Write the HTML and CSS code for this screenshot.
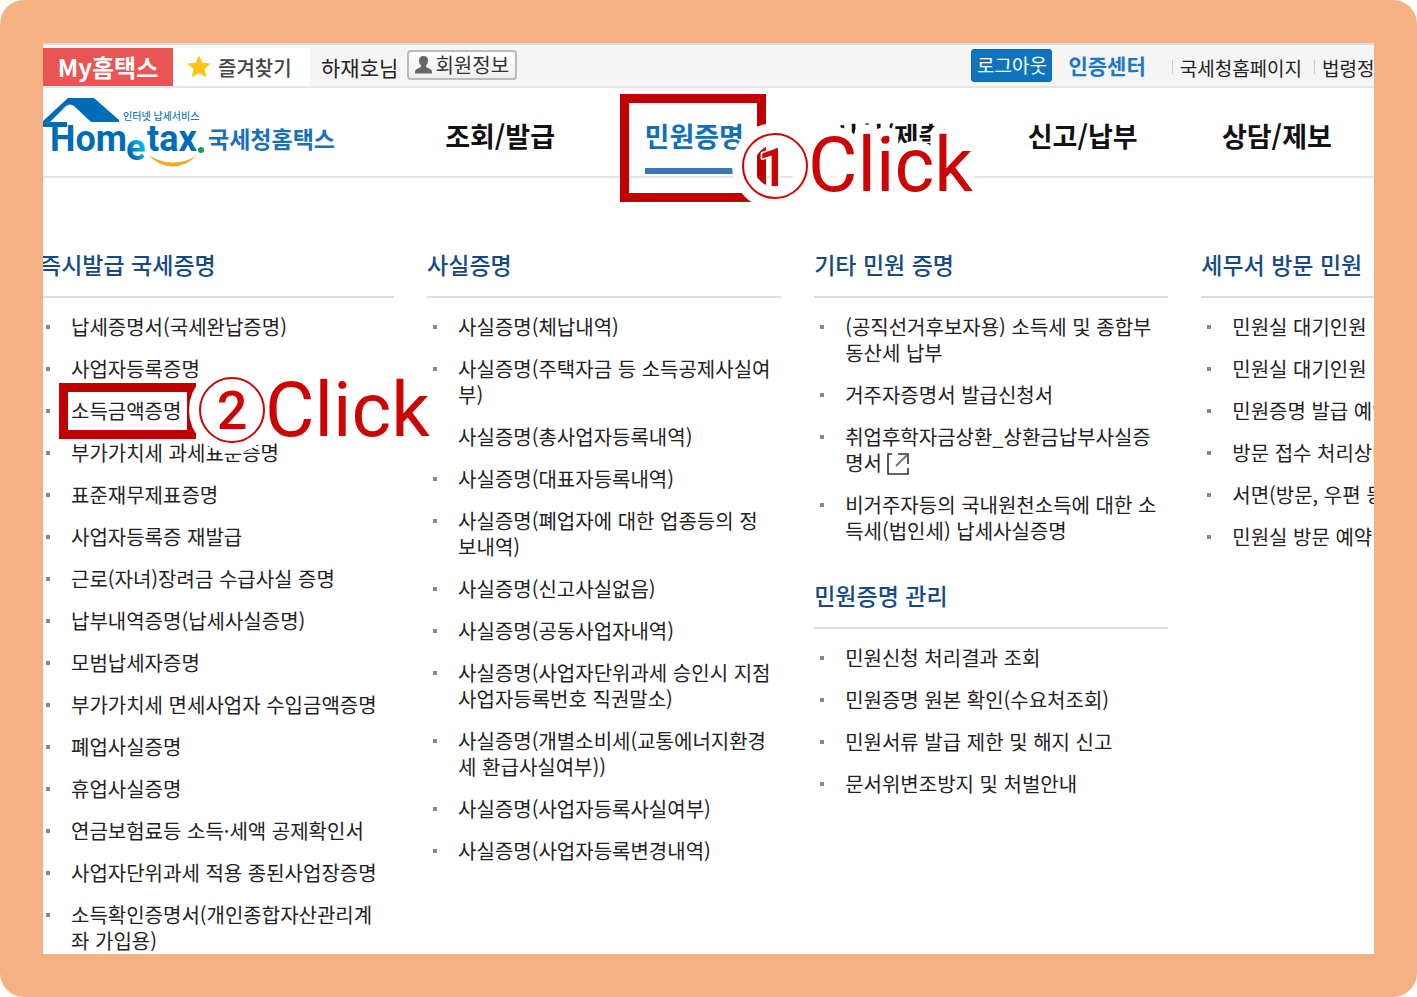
FILE: index.html
```html
<!DOCTYPE html>
<html lang="ko">
<head>
<meta charset="utf-8">
<title>국세청홈택스</title>
<link rel="stylesheet" href="styles.css">
</head>
<body>
<div class="frame">
<div class="screen">
  <header class="topbar">
    <a class="my" href="#">My홈택스</a>
    <a class="fav" href="#"><svg width="24" height="24" viewBox="0 0 24 24"><path d="M12 1.500l3 6.800 7.500.7-5.600 5 1.700 7.400L12 17.500l-6.600 3.900 1.700-7.400-5.600-5L9 8.300z" fill="#ffc20e" stroke="#ffc20e" stroke-width="1" stroke-linejoin="round"/></svg>즐겨찾기</a>
    <span class="user">하재호님</span>
    <button class="info" type="button"><svg width="17" height="18" viewBox="0 0 17 18"><path d="M8.500 0c3 0 4.500 2 4.500 4.800 0 2-.8 3.700-2 4.700v1.500l4.500 2.200c1 .6 1.500 1.500 1.500 2.800v1.500H0V16c0-1.300.5-2.200 1.500-2.800L6 11V9.500c-1.200-1-2-2.700-2-4.700C4 2 5.500 0 8.500 0z" fill="#666"/></svg>회원정보</button>
    <div class="util">
      <button class="logout" type="button">로그아웃</button>
      <a class="cert" href="#">인증센터</a>
      <a class="link" href="#">국세청홈페이지</a>
      <a class="link" href="#">법령정보</a>
    </div>
  </header>
  <div class="mainbar">
    <a class="logo" href="#" aria-label="국세청홈택스">
      <svg width="300" height="84" viewBox="0 0 300 84">
        <defs><linearGradient id="cyan" x1="0" y1="1" x2="1" y2="0"><stop offset="0.3" stop-color="#006cb8"/><stop offset="0.7" stop-color="#00b4e8"/></linearGradient></defs>
        <path fill="#006cb8" d="M0 33L25 10H51L76 32V34H48L31 18Q27 15 23 18L7 34H24V39H0z"/>
        <text class="word" x="7" y="63">Hom</text>
        <text class="word low" x="83" y="72">e</text>
        <text class="word" x="104" y="63">tax</text>
        <circle cx="158" cy="62" r="3" fill="#00a651"/>
        <path fill="#f9a72b" d="M105 67Q129 90 155 67Q130 82 105 67z"/>
        <text class="tag" x="80" y="32">인터넷 납세서비스</text>
        <text class="name" x="165" y="60">국세청홈택스</text>
      </svg>
    </a>
    <nav class="nav">
      <a href="#">조회/발급</a>
      <div class="picked"><a class="current" href="#">민원증명</a>
        <svg class="callout callout-nav" width="360" height="110" viewBox="0 0 360 110">
          <rect class="box" x="4.500" y="4.500" width="137" height="99"/>
          <circle class="halo" cx="155" cy="72" r="32"/>
          <text class="click" x="188" y="97">Click</text>
          <circle class="ring" cx="155" cy="72" r="32"/>
          <text class="digit" x="153" y="92">1</text>
        </svg>
      </div>
      <a href="#">신청/제출</a>
      <a href="#">신고/납부</a>
      <a href="#">상담/제보</a>
    </nav>
  </div>
  <main class="menu">
    <section>
      <h2>즉시발급 국세증명</h2>
      <ul>
        <li><a href="#">납세증명서(국세완납증명)</a></li>
        <li><a href="#">사업자등록증명</a></li>
        <li class="target"><a href="#">소득금액증명</a>
          <svg class="callout callout-item" width="380" height="70" viewBox="0 0 380 70">
            <rect class="box" x="4.500" y="4.500" width="128" height="47"/>
            <circle class="halo" cx="173" cy="27" r="32"/>
            <text class="click" x="206" y="53">Click</text>
            <circle class="ring" cx="173" cy="27" r="32"/>
            <text class="digit" x="173" y="46">2</text>
          </svg>
        </li>
        <li><a href="#">부가가치세 과세표준증명</a></li>
        <li><a href="#">표준재무제표증명</a></li>
        <li><a href="#">사업자등록증 재발급</a></li>
        <li><a href="#">근로(자녀)장려금 수급사실 증명</a></li>
        <li><a href="#">납부내역증명(납세사실증명)</a></li>
        <li><a href="#">모범납세자증명</a></li>
        <li><a href="#">부가가치세 면세사업자 수입금액증명</a></li>
        <li><a href="#">폐업사실증명</a></li>
        <li><a href="#">휴업사실증명</a></li>
        <li><a href="#">연금보험료등 소득·세액 공제확인서</a></li>
        <li><a href="#">사업자단위과세 적용 종된사업장증명</a></li>
        <li><a href="#">소득확인증명서(개인종합자산관리계좌 가입용)</a></li>
      </ul>
    </section>
    <section>
      <h2>사실증명</h2>
      <ul>
        <li><a href="#">사실증명(체납내역)</a></li>
        <li><a href="#">사실증명(주택자금 등 소득공제사실여부)</a></li>
        <li><a href="#">사실증명(총사업자등록내역)</a></li>
        <li><a href="#">사실증명(대표자등록내역)</a></li>
        <li><a href="#">사실증명(폐업자에 대한 업종등의 정보내역)</a></li>
        <li><a href="#">사실증명(신고사실없음)</a></li>
        <li><a href="#">사실증명(공동사업자내역)</a></li>
        <li><a href="#">사실증명(사업자단위과세 승인시 지점사업자등록번호 직권말소)</a></li>
        <li><a href="#">사실증명(개별소비세(교통에너지환경세 환급사실여부))</a></li>
        <li><a href="#">사실증명(사업자등록사실여부)</a></li>
        <li><a href="#">사실증명(사업자등록변경내역)</a></li>
      </ul>
    </section>
    <section>
      <h2>기타 민원 증명</h2>
      <ul>
        <li><a href="#">(공직선거후보자용) 소득세 및 종합부동산세 납부</a></li>
        <li><a href="#">거주자증명서 발급신청서</a></li>
        <li><a href="#">취업후학자금상환_상환금납부사실증명서<svg class="ext" width="22" height="22" viewBox="0 0 22 22" fill="none" stroke="#333" stroke-width="1.600"><path d="M5 1H1v20h20v-6M11 1h10v10"/><path d="M9 13L20 2" stroke="#777" stroke-width="2"/></svg></a></li>
        <li><a href="#">비거주자등의 국내원천소득에 대한 소득세(법인세) 납세사실증명</a></li>
      </ul>
      <h2 class="next">민원증명 관리</h2>
      <ul>
        <li><a href="#">민원신청 처리결과 조회</a></li>
        <li><a href="#">민원증명 원본 확인(수요처조회)</a></li>
        <li><a href="#">민원서류 발급 제한 및 해지 신고</a></li>
        <li><a href="#">문서위변조방지 및 처벌안내</a></li>
      </ul>
    </section>
    <section class="visit">
      <h2>세무서 방문 민원</h2>
      <ul>
        <li><a href="#">민원실 대기인원</a></li>
        <li><a href="#">민원실 대기인원</a></li>
        <li><a href="#">민원증명 발급 예약</a></li>
        <li><a href="#">방문 접수 처리상태</a></li>
        <li><a href="#">서면(방문, 우편 등)</a></li>
        <li><a href="#">민원실 방문 예약</a></li>
      </ul>
    </section>
  </main>
</div>
</div>
</body>
</html>
```
FILE: styles.css
```css
* { box-sizing: border-box; }
body { margin: 0; background: #fff; font-family: "Noto Sans CJK KR", sans-serif; color: #222; }
a { color: inherit; text-decoration: none; }
h2, ul { margin: 0; padding: 0; }
button { font-family: inherit; padding: 0; cursor: pointer; }

.frame { display: flex; height: 100vh; padding: 43px; background: #f4b183; border-radius: 24px; }
.screen { flex: 1; min-width: 0; overflow: hidden; background: #fff; }

.topbar { display: flex; align-items: center; height: 45px; padding-top: 3px; background: #f5f5f5; border-top: 2px solid #dcdcdc; border-bottom: 2px solid #e6e6e4; white-space: nowrap; }
.my { width: 130px; line-height: 38px; background: #e95555; color: #fff; font-size: 24px; font-weight: 700; text-align: center; }
.fav { display: flex; align-items: center; gap: 7px; width: 137px; height: 38px; padding-left: 14px; background: #fff; color: #444; font-size: 20px; font-weight: 500; }
.user { margin-left: 11px; font-size: 21px; line-height: 38px; }
.info { display: flex; align-items: center; justify-content: center; gap: 3px; width: 110px; height: 30px; margin-left: 9px; margin-bottom: 4px; border: 2px solid #bbb; border-radius: 4px; background: linear-gradient(#fff, #eee); color: #333; font-size: 20px; line-height: 26px; }
.util { display: flex; align-items: center; margin-left: auto; margin-right: -30px; }
.logout { width: 81px; height: 33px; margin-bottom: 4px; border: 1px solid #0a68ae; border-radius: 3px; background: #0e75bd; color: #fff; font-size: 19px; line-height: 30px; }
.cert { margin: 0 26px 4px 16px; color: #1a78c8; font-size: 21px; font-weight: 700; line-height: 33px; }
.link { display: flex; align-items: center; gap: 7px; margin-right: 12px; font-size: 19px; line-height: 33px; }
.link::before { content: ""; width: 1px; height: 14px; background: #ccc; }

.mainbar { display: flex; height: 90px; border-bottom: 2px solid #e6e6e6; }
.logo { flex: 0 0 360px; overflow: hidden; }
.logo svg { display: block; }
.word { font: 700 36px Roboto, sans-serif; fill: #006cb8; }
.low { fill: url(#cyan); }
.tag { font-size: 10px; font-weight: 500; fill: #1a78c0; }
.name { font-size: 23px; font-weight: 700; fill: #1a70b8; }
.nav { flex: 1; display: grid; grid-template-columns: repeat(5, 1fr); justify-items: center; font-size: 27px; font-weight: 700; line-height: 36px; color: #111; }
.nav > a { padding-top: 30px; }
.picked { position: relative; }
.current { display: block; height: 86px; padding-top: 30px; border-bottom: 6px solid #3f75b8; color: #0e70bf; }

.callout { position: absolute; z-index: 2; overflow: visible; pointer-events: none; }
.callout-nav { left: -25px; top: 6px; }
.callout-item { left: 19px; top: -15px; }
.box { fill: none; stroke: #c00000; stroke-width: 9px; }
.halo { fill: none; stroke: #fff; stroke-width: 22px; }
.ring { fill: none; stroke: #cc0404; stroke-width: 2px; }
.digit, .click { fill: #cc0404; stroke: #fff; paint-order: stroke; stroke-linejoin: round; }
.digit { font: 500 54px Roboto, sans-serif; text-anchor: middle; stroke-width: 3px; }
.click { font: 400 76px Roboto, sans-serif; stroke-width: 18px; }

.menu { display: grid; grid-template-columns: repeat(4, 1fr); gap: 33px; width: 114%; margin-left: -3px; padding-top: 70px; padding-right: 2px; }
.menu h2 { padding-bottom: 16px; border-bottom: 2px solid #ddd; color: #174a85; font-size: 23px; font-weight: 500; line-height: 32px; }
.menu .next { margin-top: 35px; }
.menu ul { list-style: none; padding-top: 16px; }
.menu li { display: flex; gap: 21px; padding: 0 8px 0 6px; margin-bottom: 16px; font-size: 20px; line-height: 26px; }
.menu li:last-child { margin-bottom: 0; }
.menu li::before { content: ""; flex: none; width: 4px; height: 4px; margin-top: 11px; background: #888; }
.menu .target { position: relative; }
.ext { margin-left: 5px; vertical-align: -4px; }
.visit { white-space: nowrap; }
```
